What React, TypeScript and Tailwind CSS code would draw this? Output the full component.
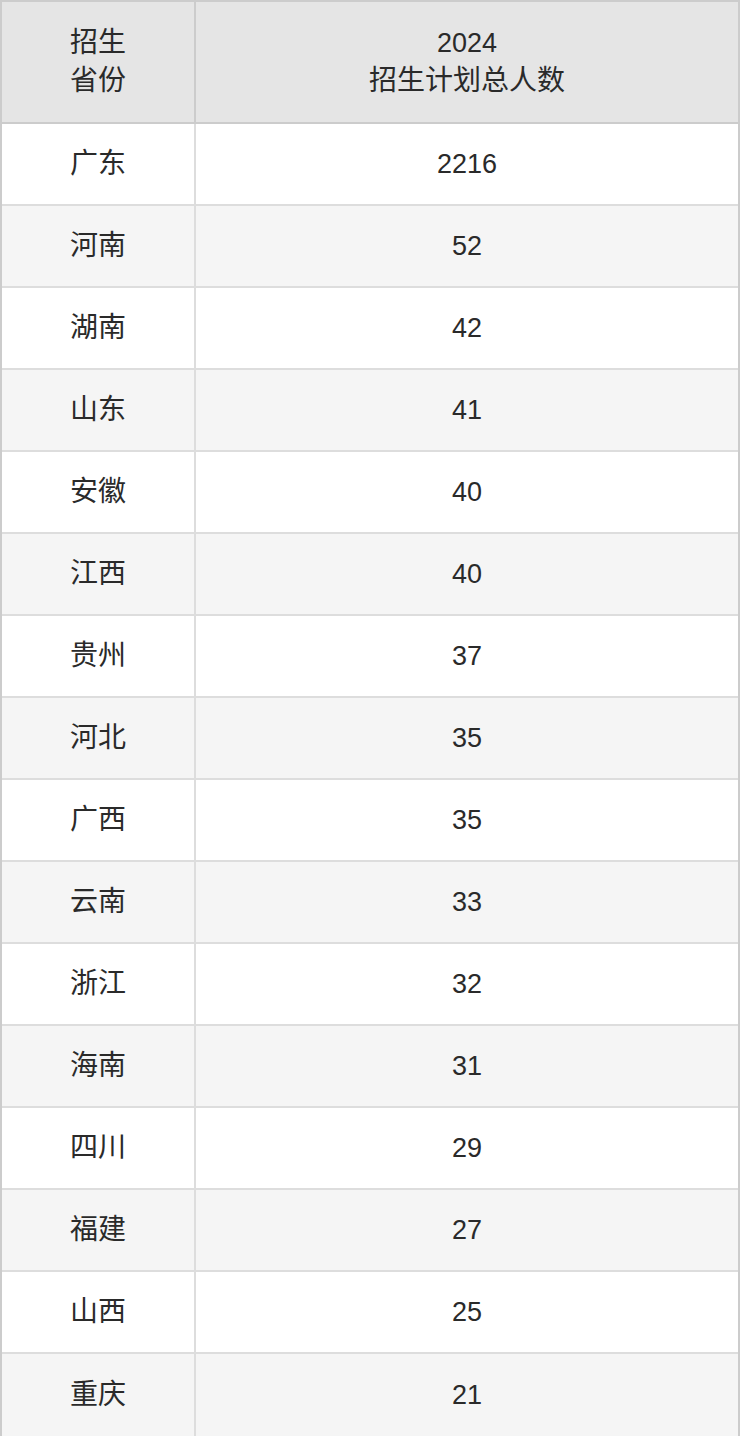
import React from "react";

const rows: [string, string][] = [
  ["广东", "2216"],
  ["河南", "52"],
  ["湖南", "42"],
  ["山东", "41"],
  ["安徽", "40"],
  ["江西", "40"],
  ["贵州", "37"],
  ["河北", "35"],
  ["广西", "35"],
  ["云南", "33"],
  ["浙江", "32"],
  ["海南", "31"],
  ["四川", "29"],
  ["福建", "27"],
  ["山西", "25"],
  ["重庆", "21"],
];

export default function App() {
  return (
    <div
      className="w-[740px] bg-white text-[#2a2a2a] text-[27px] leading-[38px]"
      style={{ fontFamily: '"Liberation Sans", "Noto Sans CJK SC", sans-serif' }}
    >
      <div className="border-2 border-[#cccccc]">
        <div className="flex h-[122px] bg-[#e5e5e5] border-b-2 border-[#cccccc]">
          <div className="w-[194px] flex items-center justify-center text-center text-[28px] border-r-2 border-[#cccccc]">
            招生<br />省份
          </div>
          <div className="flex-1 flex flex-col items-center justify-center text-center">
            <span>2024</span>
            <span className="text-[28px]">招生计划总人数</span>
          </div>
        </div>
        {rows.map(([p, n], i) => (
          <div
            key={p + i}
            className={
              "flex h-[82px] " +
              (i < rows.length - 1 ? "border-b-2 border-[#dddddd] " : "") +
              (i % 2 === 0 ? "bg-white" : "bg-[#f5f5f5]")
            }
          >
            <div className="w-[194px] flex items-center justify-center text-[28px] border-r-2 border-[#dddddd]">
              {p}
            </div>
            <div className="flex-1 flex items-center justify-center">{n}</div>
          </div>
        ))}
      </div>
    </div>
  );
}
